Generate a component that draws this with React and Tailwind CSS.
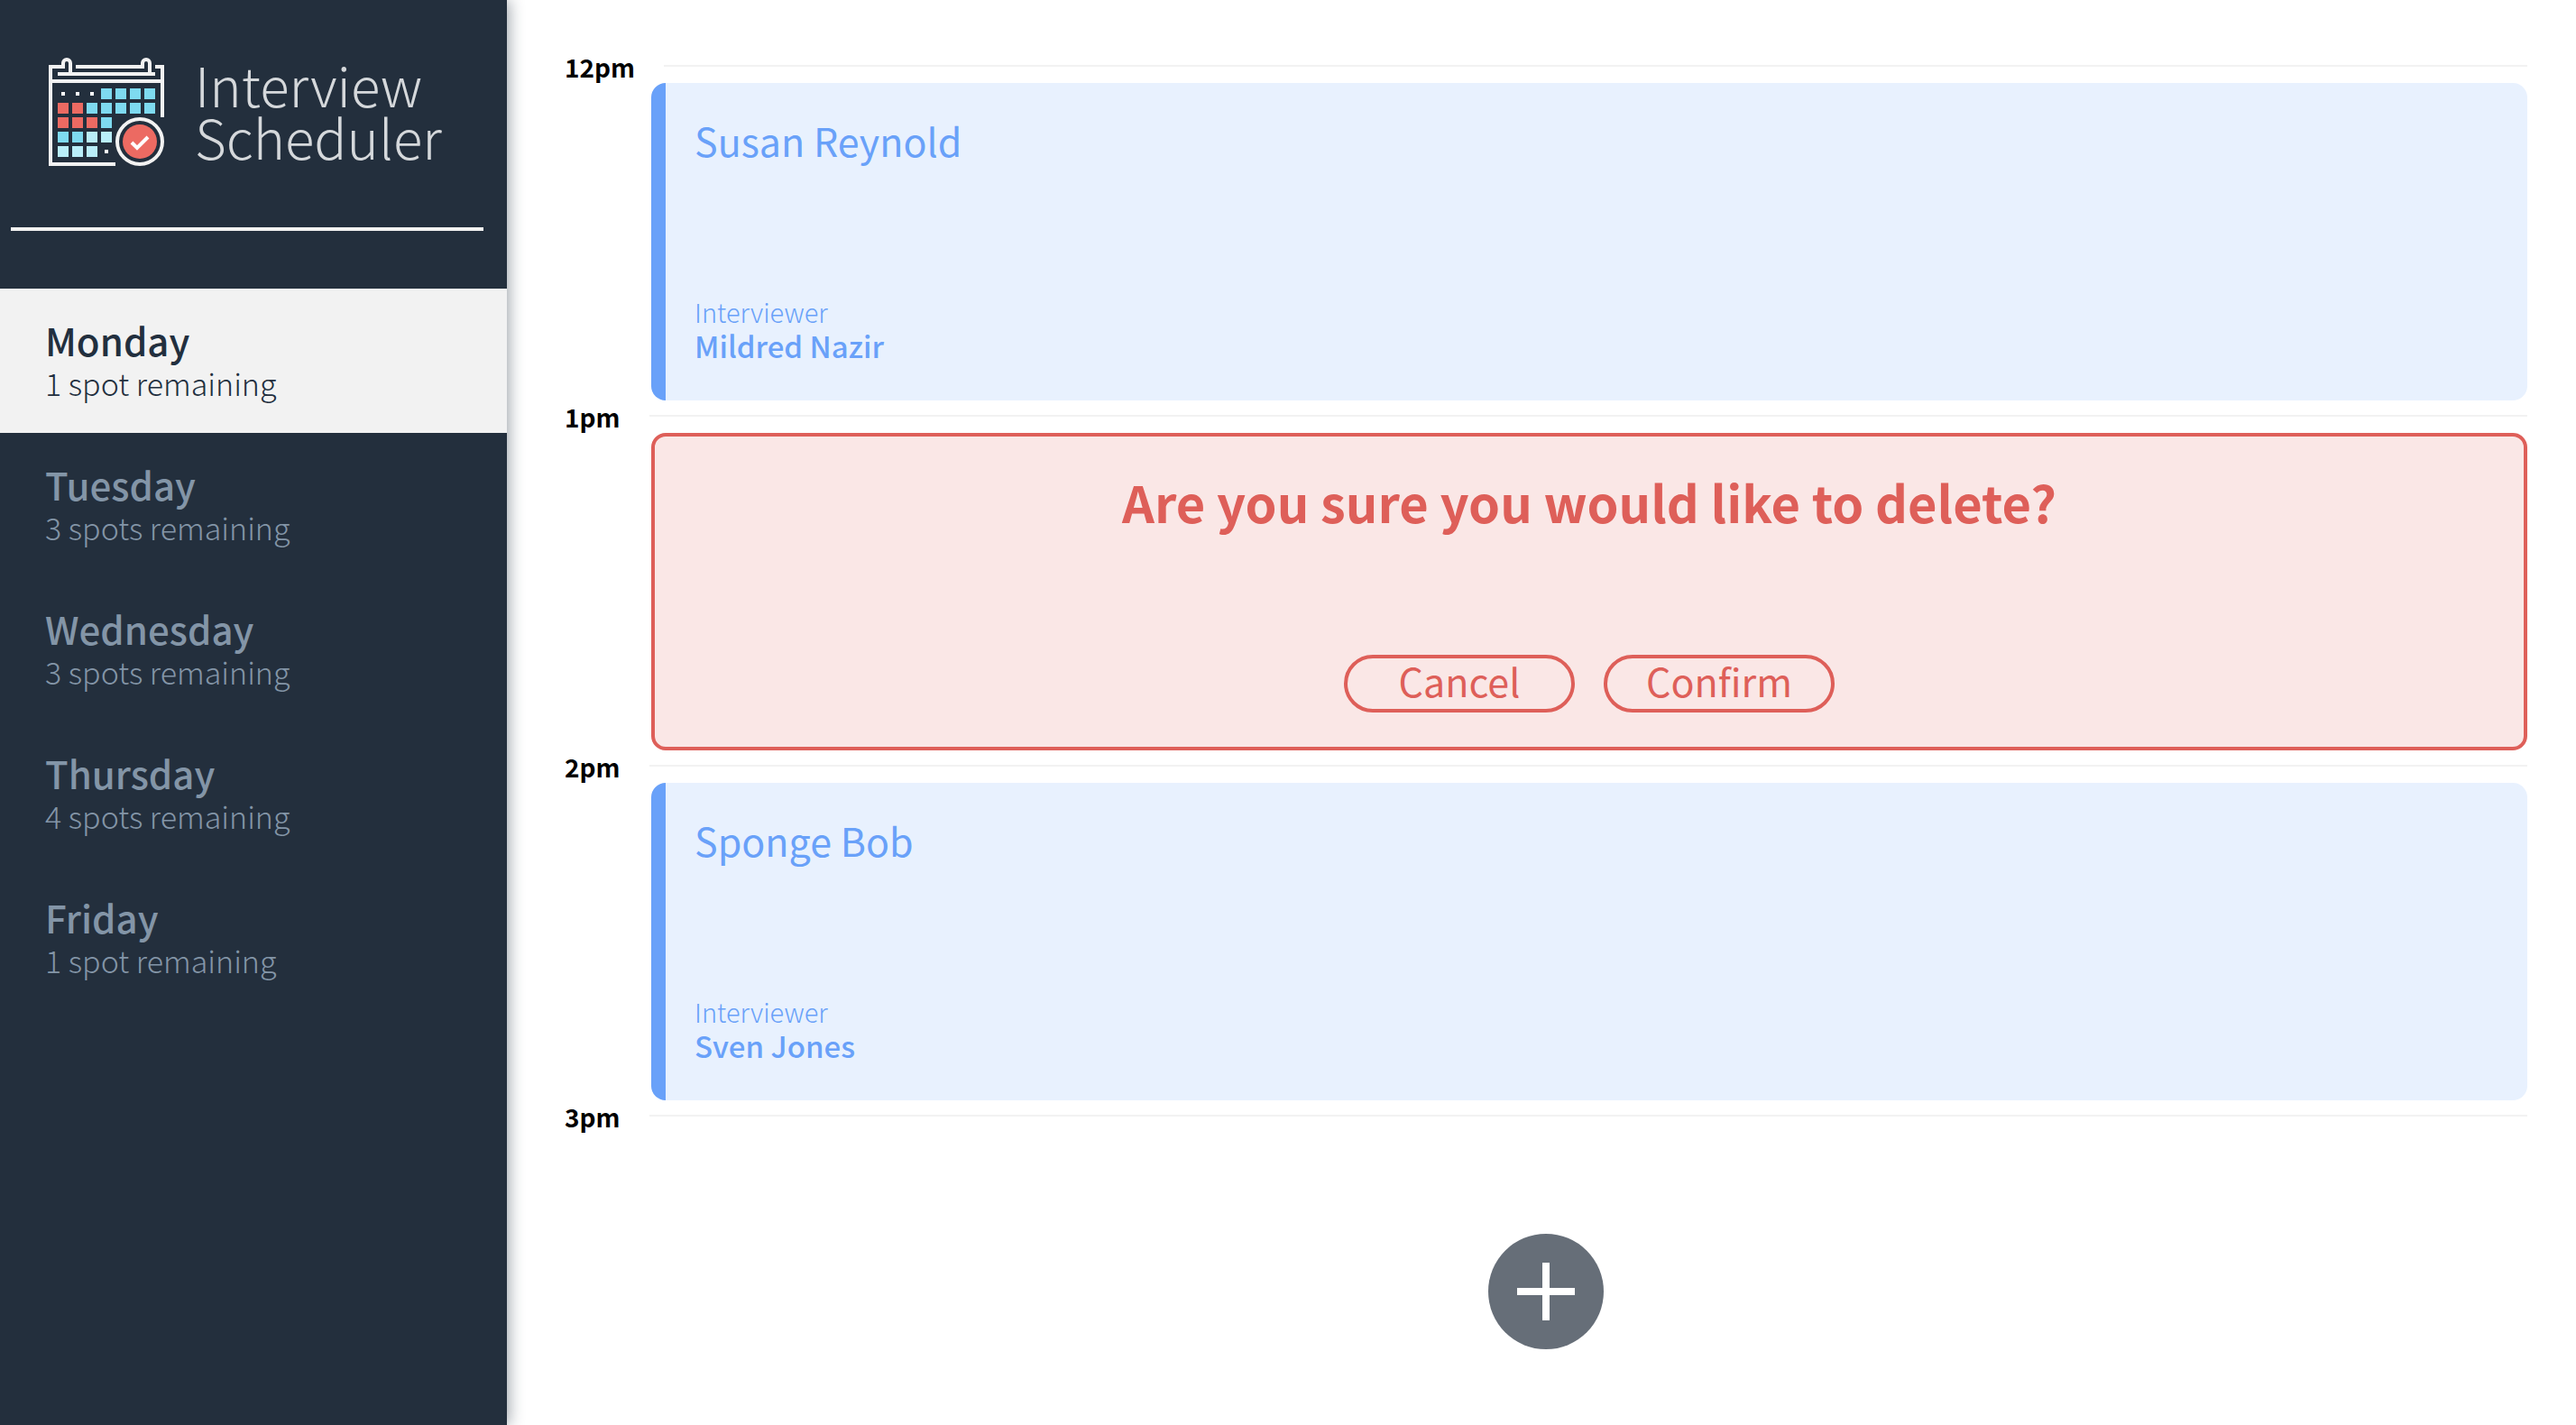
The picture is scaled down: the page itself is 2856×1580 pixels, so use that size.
const days = [
  { name: "Monday", spots: "1 spot remaining", selected: true },
  { name: "Tuesday", spots: "3 spots remaining" },
  { name: "Wednesday", spots: "3 spots remaining" },
  { name: "Thursday", spots: "4 spots remaining" },
  { name: "Friday", spots: "1 spot remaining" },
];

const CYAN = "#7edaf0";
const ICE = "#b9eef9";
const CORAL = "#ec6a62";

// Rows of the calendar grid: "." is a dot, other letters pick a fill.
const cells = ["...cccc", "rrccccc", "rrrc", "ccii", "iii."];
const fills = { c: CYAN, r: CORAL, i: ICE };

function CalendarLogo() {
  return (
    <svg viewBox="0 0 128 120" className="h-[120px] w-32 shrink-0" fill="none" aria-hidden="true">
      <g stroke="#f2f2f2" strokeWidth="4">
        <path d="M24 18V6a4 4 0 0 0-8 0v4H2v108h72" />
        <path d="M112 18V6a4 4 0 0 0-8 0v4H30" />
        <path d="M118 10h8v56" />
        <path d="M10 18h108M2 26h124" />
        <circle cx="101" cy="93" r="25" />
      </g>
      {cells.map((row, r) =>
        row.split("").map((cell, c) =>
          cell === "." ? (
            <rect key={`${r}-${c}`} x={14 + c * 16} y={38 + r * 16} width="4" height="4" fill="#fff" />
          ) : (
            <rect key={`${r}-${c}`} x={10 + c * 16} y={34 + r * 16} width="12" height="12" fill={fills[cell]} />
          )
        )
      )}
      <circle cx="101" cy="93" r="19" fill={CORAL} />
      <path d="M92 94l6 6 12-12" stroke="#fff" strokeWidth="4" />
    </svg>
  );
}

function DayItem({ name, spots, selected }) {
  return (
    <li>
      <button
        type="button"
        className={
          selected
            ? "block w-full bg-[#f2f2f2] py-8 pl-[50px] text-left text-[#222f3e]"
            : "block w-full py-8 pl-[50px] text-left text-[#8395a7]"
        }
      >
        <span className="block text-[42px] leading-[50px] font-medium">{name}</span>
        <span className="block text-[34px] leading-[46px] font-light">{spots}</span>
      </button>
    </li>
  );
}

function Slot({ time, wide, children }) {
  return (
    <section>
      <header className="flex h-9 items-start">
        <h2 className={wide ? "w-[110px] text-[28px] leading-9 font-bold text-black" : "w-[94px] text-[28px] leading-9 font-bold text-black"}>
          {time}
        </h2>
        <hr className="mt-4 h-0.5 flex-1 border-0 bg-[#f2f2f2]" />
      </header>
      {children}
    </section>
  );
}

function Appointment({ student, interviewer }) {
  return (
    <article className="ml-24 flex h-[352px] flex-col justify-between rounded-2xl border-l-16 border-[#69a1f9] bg-[#e8f1fe] px-8 pt-8 pb-10 text-[#69a1f9]">
      <h3 className="text-[43px] leading-[62px]">{student}</h3>
      <div>
        <h4 className="text-[29px] leading-[34px] font-light">Interviewer</h4>
        <p className="text-[33px] leading-[42px] font-medium">{interviewer}</p>
      </div>
    </article>
  );
}

function ConfirmButton({ children }) {
  return (
    <button type="button" className="flex h-16 w-64 items-center justify-center rounded-full border-4 border-[#de5f59] pb-2 text-[43px] leading-[48px]">
      {children}
    </button>
  );
}

export default function App() {
  return (
    <main className="flex min-h-screen bg-white font-['Noto_Sans_CJK_SC','Noto_Sans',sans-serif]">
      <aside className="z-10 w-[562px] shrink-0 bg-[#232f3d] shadow-[2px_0_16px_rgba(34,47,62,0.45)]">
        <div className="flex h-[252px] items-start gap-[34px] pt-16 pl-[54px]">
          <CalendarLogo />
          <p className="text-[60px] leading-[58px] font-light text-[#d5d8db]">
            Interview
            <br />
            Scheduler
          </p>
        </div>
        <hr className="mr-[26px] mb-16 ml-3 h-1 border-0 bg-[#f2f2f2]" />
        <nav>
          <ul>
            {days.map((day) => (
              <DayItem key={day.name} {...day} />
            ))}
          </ul>
        </nav>
      </aside>

      <div className="flex-1 pt-14 pr-[54px] pl-16">
        <Slot time="12pm" wide>
          <Appointment student="Susan Reynold" interviewer="Mildred Nazir" />
        </Slot>
        <Slot time="1pm">
          <article className="ml-24 flex h-[352px] flex-col items-center justify-between rounded-2xl border-4 border-[#de5f59] bg-[#fae7e6] pt-8 pb-[38px] text-[#de5f59]">
            <h3 className="text-[56px] leading-[80px] font-bold">Are you sure you would like to delete?</h3>
            <div className="flex gap-8">
              <ConfirmButton>Cancel</ConfirmButton>
              <ConfirmButton>Confirm</ConfirmButton>
            </div>
          </article>
        </Slot>
        <Slot time="2pm">
          <Appointment student="Sponge Bob" interviewer="Sven Jones" />
        </Slot>
        <Slot time="3pm">
          <div className="flex justify-center pt-28">
            <button type="button" aria-label="Add appointment" className="h-32 w-32 rounded-full">
              <svg viewBox="0 0 128 128" className="h-32 w-32" aria-hidden="true">
                <circle cx="64" cy="64" r="64" fill="#666e78" />
                <path d="M64 32v64M32 64h64" stroke="#fff" strokeWidth="8" />
              </svg>
            </button>
          </div>
        </Slot>
      </div>
    </main>
  );
}
